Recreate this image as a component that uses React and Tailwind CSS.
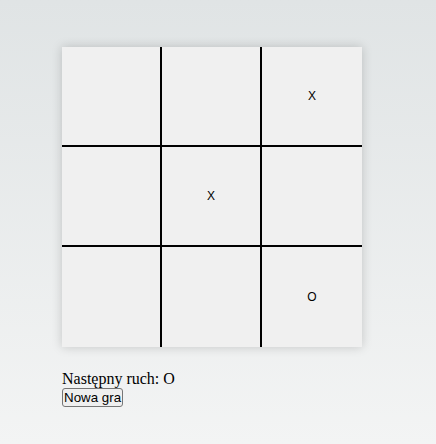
import React, { useState } from "react";

const START = [null, null, "X", null, "X", null, null, null, "O"];

export default function App() {
  const [cells, setCells] = useState(START);
  const [next, setNext] = useState("O");

  const play = (i) => {
    if (cells[i]) return;
    const copy = [...cells];
    copy[i] = next;
    setCells(copy);
    setNext(next === "X" ? "O" : "X");
  };

  const reset = () => {
    setCells(Array(9).fill(null));
    setNext("X");
  };

  return (
    <div className="min-h-screen w-full bg-gradient-to-b from-[#e0e4e5] to-[#f3f4f4] pt-[47px] pl-[62px] font-['Liberation_Serif',serif] text-black">
      <div className="grid w-[300px] h-[300px] grid-cols-3 grid-rows-3 bg-[#f0f0f0] shadow-[0_0_10px_rgba(0,0,0,0.18)]">
        {cells.map((c, i) => (
          <div
            key={i}
            onClick={() => play(i)}
            className={`flex items-center justify-center border-black font-['Liberation_Sans',Arial,sans-serif] text-[12px] ${i % 3 !== 2 ? "border-r-2" : ""} ${i < 6 ? "border-b-2" : ""}`}
          >
            {c}
          </div>
        ))}
      </div>
      <div className="mt-[23px] text-[16px] leading-[18px]">Następny ruch: {next}</div>
      <button
        onClick={reset}
        className="block rounded-[3px] border border-[#767676] bg-[#efefef] px-[1px] py-[1px] font-['Liberation_Sans',Arial,sans-serif] text-[13.33px] leading-[15px] text-black"
      >
        Nowa gra
      </button>
    </div>
  );
}
